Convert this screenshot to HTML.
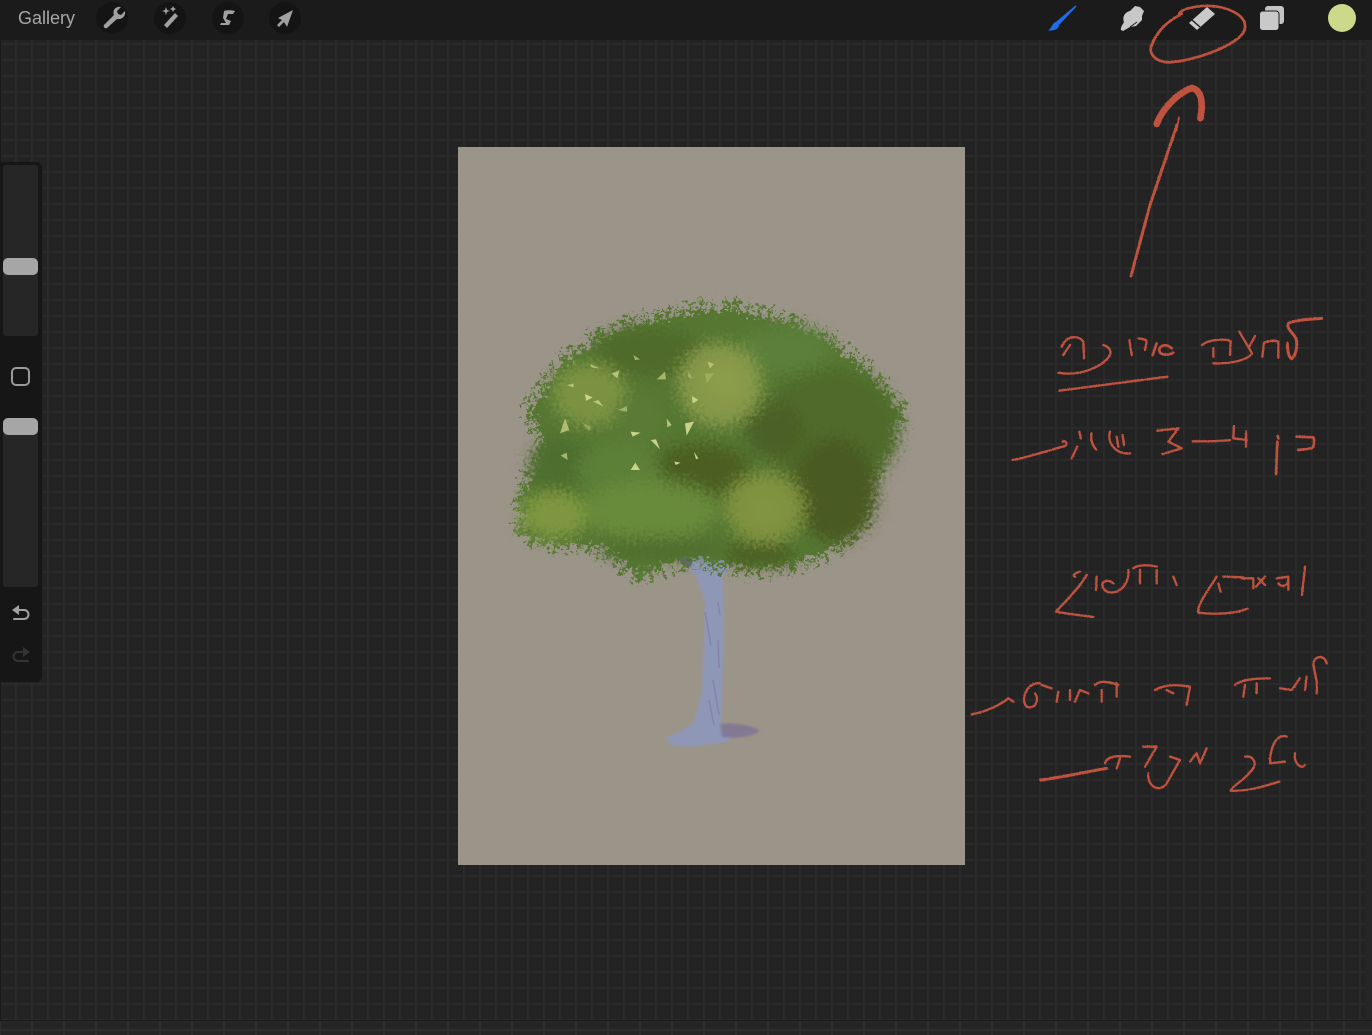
<!DOCTYPE html>
<html><head><meta charset="utf-8"><style>
html,body{margin:0;padding:0;background:#232323}
#p{position:relative;width:1372px;height:1035px;overflow:hidden;background-color:#232323;
background-image:linear-gradient(#2b2b2b 1.2px,transparent 2.4px),linear-gradient(90deg,#2b2b2b 1.2px,transparent 2.4px);
background-size:16px 16px;background-position:0 11px,-1px 0}
#bar{position:absolute;left:0;top:0;width:1372px;height:40px;background:#1b1b1b}
#g{position:absolute;left:18px;top:8px;font:18px/20px "Liberation Sans",sans-serif;color:#a8a8a8}
.c{position:absolute;top:2px;width:32px;height:32px;border-radius:50%;background:#141414}
svg{position:absolute;left:0;top:0}
#bot{position:absolute;left:0;top:1020px;width:1372px;height:15px;background-color:#252525;border-top:1px solid #1a1a1a;box-sizing:border-box;
background-image:linear-gradient(#2d2d2d 2px,transparent 2px),linear-gradient(90deg,#2f2f2f 2px,transparent 2px);background-size:32px 16px;background-position:0 8px,-1px 0}
#l{position:absolute;left:0;top:40px;width:1px;height:980px;background:#1a1a1a}
#r{position:absolute;left:1366px;top:40px;width:6px;height:980px;background:#262626}
#side{position:absolute;left:0;top:162px;width:42px;height:520px;background:#161616;border-radius:0 6px 6px 0}
.t{position:absolute;left:3px;width:35px;background:#262626;border-radius:3px}
.th{position:absolute;left:3px;width:35px;height:17px;background:#a6a6a6;border-radius:5px}
#sq{position:absolute;left:11px;top:367px;width:15px;height:15px;border:2px solid #9a9a9a;border-radius:5px}
#cv{position:absolute;left:457.500px;top:147px;width:507.500px;height:718px;background:#9b9489}
</style></head><body><div id="p">
<div id="l"></div><div id="r"></div><div id="bot"></div>
<div id="bar"></div><div id="g">Gallery</div>
<div class="c" style="left:96px"></div><div class="c" style="left:154px"></div><div class="c" style="left:212px"></div><div class="c" style="left:269px"></div>
<div id="side"></div>
<div class="t" style="top:165px;height:171px"></div><div class="th" style="top:258px"></div>
<div id="sq"></div>
<div class="t" style="top:419px;height:168px"></div><div class="th" style="top:418px"></div>
<div id="cv"></div>
<svg width="1372" height="1035" viewBox="0 0 1372 1035" xmlns="http://www.w3.org/2000/svg">
<defs>
<filter id="leaf" filterUnits="userSpaceOnUse" x="480" y="270" width="470" height="340">
<feTurbulence type="fractalNoise" baseFrequency="0.22" numOctaves="3" seed="7" result="n"/>
<feDisplacementMap in="SourceGraphic" in2="n" scale="22" xChannelSelector="R" yChannelSelector="G"/>
</filter>
<filter id="patch" filterUnits="userSpaceOnUse" x="480" y="270" width="470" height="340">
<feGaussianBlur stdDeviation="7" result="b"/>
<feTurbulence type="fractalNoise" baseFrequency="0.3" numOctaves="3" seed="3" result="n"/>
<feDisplacementMap in="b" in2="n" scale="24" xChannelSelector="R" yChannelSelector="G"/>
</filter>
<filter id="soft"><feGaussianBlur stdDeviation="1"/></filter>
<filter id="soft3" x="-40%" y="-40%" width="180%" height="180%"><feGaussianBlur stdDeviation="10"/></filter>
<filter id="chalk" x="-5%" y="-5%" width="110%" height="110%">
<feTurbulence type="fractalNoise" baseFrequency="0.8" numOctaves="2" seed="2" result="n"/>
<feDisplacementMap in="SourceGraphic" in2="n" scale="1.4"/>
</filter>
<clipPath id="crownclip"><path d="M490 290H950V600H490Z"/></clipPath>
</defs>

<!-- trunk -->
<g>
<path d="M672 549L690 552L735 556L723 577L724 640L722 700L721 726L732 738L722 743L690 747L672 745L665 737L680 732L694 722L702 690L704 640L705 600L695 575Z" fill="#8f97b6" filter="url(#soft)"/>
<path d="M720 724C735 722 755 726 760 731C750 738 735 738 722 737Z" fill="#7a6e96" opacity=".7" filter="url(#soft)"/>
<path d="M672 549L690 566" stroke="#6f5f98" stroke-width="6" fill="none"/>
<path d="M718 602L720 615M718 640L719 668M713 680L719 715M709 700L714 725M705 612L711 645" stroke="#7c74a2" stroke-width="1.500" fill="none" opacity=".55"/>
</g>

<!-- crown -->
<g filter="url(#leaf)">
<path id="sil" fill="#557732" d="M532 410L560 368L603 337L650 322L700 312L735 310L790 325L830 343L868 375L900 412L882 445L866 480L858 520L832 550L790 564L745 568L690 556L640 572L600 545L555 542L526 536L524 492L548 450Z"/>
<path fill="none" stroke="#557732" stroke-width="22" stroke-dasharray="4 7 3 9 5 6" d="M532 410L560 368L603 337L650 322L700 312L735 310L790 325L830 343L868 375L900 412L882 445L866 480L858 520L832 550L790 564L745 568L690 556L640 572L600 545L555 542L526 536L524 492L548 450Z"/>
<path fill="none" stroke="#60803a" stroke-width="12" stroke-dasharray="3 12 2 10" d="M900 410L908 414M530 500L524 488L520 530L545 545M640 570L636 580"/>
</g>
<g filter="url(#patch)">
<ellipse cx="650" cy="352" rx="55" ry="24" fill="#4f6a2b"/>
<ellipse cx="785" cy="350" rx="45" ry="24" fill="#5b7f3a"/>
<ellipse cx="830" cy="430" rx="68" ry="62" fill="#4f6a2a"/>
<ellipse cx="835" cy="490" rx="42" ry="52" fill="#4a5a20"/>
<ellipse cx="775" cy="430" rx="30" ry="28" fill="#4c6025"/>
<ellipse cx="700" cy="470" rx="52" ry="26" fill="#4b5f24"/>
<ellipse cx="560" cy="465" rx="30" ry="28" fill="#4d6e2e"/>
<ellipse cx="720" cy="385" rx="42" ry="42" fill="#84974a"/>
<ellipse cx="590" cy="395" rx="38" ry="32" fill="#7a9242"/>
<ellipse cx="640" cy="420" rx="26" ry="28" fill="#5a7a35"/>
<ellipse cx="620" cy="470" rx="42" ry="28" fill="#5c8038"/>
<ellipse cx="555" cy="515" rx="34" ry="24" fill="#7e963f"/>
<ellipse cx="650" cy="510" rx="68" ry="30" fill="#688a3a"/>
<ellipse cx="765" cy="508" rx="40" ry="36" fill="#7e9140"/>
<ellipse cx="660" cy="548" rx="60" ry="10" fill="#4f6d2f"/>
<ellipse cx="760" cy="554" rx="36" ry="10" fill="#4a5c22"/>
</g>
<ellipse cx="725" cy="382" rx="24" ry="22" fill="#8f9f4c" opacity=".7" filter="url(#soft3)"/>
<ellipse cx="765" cy="510" rx="20" ry="18" fill="#84963f" opacity=".7" filter="url(#soft3)"/>
<g transform="translate(510 290) scale(.33333)" fill="#c9d488">
<path d="M150 430L165 385L178 420Z" opacity=".75"/><path d="M525 400L552 395L530 437Z"/><path d="M362 425L392 428L368 440Z"/><path d="M422 450L438 448L450 478Z"/><path d="M362 540L376 518L390 540Z"/><path d="M152 497L170 488L173 510Z" opacity=".7"/><path d="M225 312L248 322L228 333Z"/><path d="M250 335L265 330L280 350Z" opacity=".8"/><path d="M440 268L465 245L468 268Z" opacity=".7"/><path d="M305 250L328 242L322 265Z" opacity=".8"/><path d="M546 318L565 330L548 340Z"/><path d="M470 385L485 405L472 412Z" opacity=".8"/><path d="M552 485L565 505L558 508Z"/><path d="M493 515L512 518L497 525Z"/><path d="M240 222L268 235L245 232Z" opacity=".8"/><path d="M370 195L390 208L375 210Z" opacity=".7"/><path d="M325 360L350 348L352 365Z" opacity=".6"/><path d="M592 215L612 222L600 235Z" opacity=".7"/><path d="M170 285L192 280L190 293Z" opacity=".7"/><path d="M215 397L243 410L238 425Z" opacity=".4"/><path d="M535 245L548 265L535 262Z" opacity=".5"/><path d="M585 250L612 250L590 280Z" opacity=".3"/>
</g>

<!-- sidebar icons -->
<g fill="none" stroke="#a2a2a2" stroke-width="2" stroke-linecap="round" stroke-linejoin="round">
<path d="M15 610H24C30 610 30 619 24 619H14"/><path d="M12 610L19 605V615Z" fill="#a2a2a2" stroke="none"/>
<g stroke="#343434"><path d="M27 652H18C12 652 12 661 18 661H28"/><path d="M30 652L23 647V657Z" fill="#343434" stroke="none"/></g>
</g>

<!-- top bar left icons -->
<g fill="#a0a0a0">
<path d="M104 25L114 15C112 10 116 6 121 7L117 11L118 14L121 15L125 11C126 16 122 20 117 19L107 28C105 29 103 27 104 25Z"/>
<path d="M164 25L175 13L178 16L167 28Z"/><path d="M166 7L167 10L170 11L167 12L166 15L165 12L162 11L165 10Z"/><path d="M173 6L174 8L176 9L174 10L173 12L172 10L170 9L172 8Z"/>
<path d="M224 11C226 10 232 10 235 11L233 14H228L226 19L231 21L229 25H220L221 23H226L223 18Z"/>
<path d="M293 10L287 27L284 22L279 27L277 25L282 20L278 18Z"/>
</g>

<!-- top bar right icons -->
<path d="M1075.500 6.500L1056 23L1058 25Z" stroke="#1f6ee8" stroke-width="1.600" fill="#1f6ee8" stroke-linejoin="round"/>
<path d="M1055 22C1052 24 1052 28 1048 30.500C1054 31 1059 29 1059 25Z" fill="#1f6ee8"/>
<path d="M1121 30C1120 28 1123 24 1124 22C1122 17 1125 12 1130 11L1135 6L1140 7L1144 11L1142 16L1142 20L1136 26L1130 27L1123 31Z" fill="#c8c8c8"/>
<path d="M1130 27L1137 22" stroke="#1b1b1b" stroke-width="1"/>
<path d="M1189 23L1207 7L1215 14L1197 30Z" fill="#c9c9c9"/>
<path d="M1192 20L1200 27" stroke="#1b1b1b" stroke-width="1.300"/>
<rect x="1265" y="6" width="19" height="18" rx="3" fill="#c4c4c4"/>
<rect x="1259.500" y="11" width="19.500" height="19.500" rx="3" fill="#c9c9c9" stroke="#1b1b1b" stroke-width="1"/>
<circle cx="1342" cy="18" r="14" fill="#cdd98a"/>

<!-- red handwriting -->
<g fill="none" stroke="#bf5240" stroke-linecap="round" stroke-linejoin="round" filter="url(#chalk)">
<g transform="translate(1030 0) scale(.33333)" stroke-width="8">
<path d="M448 40L460 30C500 15 560 10 610 35C650 55 655 85 630 110C590 145 500 180 420 187C375 187 355 160 365 135C385 85 420 60 455 42" />
<path d="M380 372C395 330 440 280 485 264C510 268 522 300 511 355" stroke-width="20"/>
<path d="M447 352L440 390" stroke-width="5"/>
</g>
<path d="M1177 125L1150 205L1131 276" stroke-width="3"/>
<g transform="translate(1000 300) scale(.33333)" stroke-width="7">
<path d="M965 55C930 58 885 60 865 70C858 85 880 100 888 115C895 140 885 170 875 176C866 172 862 150 862 130" stroke-width="9"/>
<path d="M787 170L792 128C805 122 825 120 835 125L835 172"/>
<path d="M640 190C690 192 745 180 756 160L718 95M765 108L748 140M606 135C625 118 675 115 692 124L690 165M640 145L640 170"/>
<path d="M520 158C500 168 478 165 478 150C478 135 500 130 515 145M470 130L458 165" stroke-width="8"/>
<path d="M415 115C430 118 440 118 440 125L435 150M388 120L395 165"/>
<path d="M175 218C240 230 310 200 330 165C335 150 325 140 310 135M185 140C200 105 235 105 250 125L252 175M210 135L190 165"/>
<path d="M178 272L502 230"/>
<path d="M38 480C90 470 150 450 195 438C205 430 195 420 188 425M215 475L232 440M238 395L242 415M330 395C320 430 350 465 390 460M350 410L355 440M368 405L372 435M275 400C270 420 280 440 288 448"/>
<path d="M472 392L535 385L505 425L545 445L488 462"/>
<path d="M578 424C620 424 650 425 690 420M702 378L700 415L740 420M738 395L738 440"/>
<path d="M828 522L832 425M833 408L835 415M890 410L940 412C945 425 942 440 935 445L895 450" stroke-width="8"/>
</g>
<g transform="translate(960 550) scale(.33333)" stroke-width="7">
<path d="M1035 50L1026 135M985 85C985 115 960 110 955 100M950 85L985 80L985 120M888 110L915 80M915 105L895 85M845 85L880 85L880 115M790 80L850 82M775 100L782 125M770 80C745 120 710 165 715 188C770 195 830 190 862 176"/>
<path d="M640 80L650 105M590 50C550 40 525 50 520 55M590 60L590 100M540 60L540 100M505 60C510 120 450 145 430 115C420 95 440 85 460 100M410 80L408 120M360 65C345 70 335 75 345 80M380 75C355 120 300 170 288 185C320 192 360 195 400 201"/>
<path d="M1100 340C1095 315 1065 315 1060 340C1060 360 1075 390 1070 430M1040 380L1035 420M1020 385L995 420L960 415M930 385C880 385 840 390 825 405M890 400L890 430M855 405L850 440"/>
<path d="M585 420C620 400 660 405 690 410L680 465M620 420L640 430M475 405C430 390 415 395 405 405M470 400L470 440M425 420L425 455M385 430L360 420L345 455M330 420L330 450M295 425L290 455M245 405L275 415M240 400C200 395 180 450 200 470C225 480 240 450 225 430M35 493C80 485 120 465 145 445L160 455"/>
<path d="M980 560C950 550 930 590 930 640L975 635M1005 610C1000 640 1025 660 1035 645M855 620C880 615 890 640 880 655C855 690 820 705 812 722C860 725 910 710 958 695"/>
<path d="M740 595L720 640L710 610L690 635M630 620L660 630L620 700C600 730 560 710 565 670M550 590L590 590L555 650M480 625L470 655M435 640C440 620 470 615 510 620" />
<path d="M242 690C320 680 380 665 440 655" stroke-width="9"/>
</g>
</g>
</svg>
</div></body></html>
